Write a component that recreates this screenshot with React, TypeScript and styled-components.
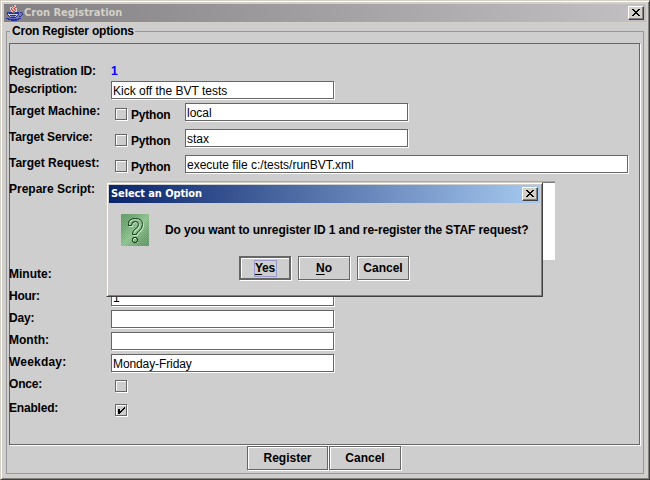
import React from "react";
import styled, { createGlobalStyle, css } from "styled-components";

const GlobalStyle = createGlobalStyle`
  html, body { margin: 0; padding: 0; overflow: hidden; }
  * { box-sizing: border-box; }
  body {
    font: bold 12px/16px "Liberation Sans", Arial, sans-serif;
    color: #000;
    background: #cecece;
  }
`;

const Frame = styled.div`
  position: relative;
  width: 650px;
  height: 480px;
  display: flex;
  flex-direction: column;
  padding: 3px;
  background: #d4d0c8;
  border: 1px solid;
  border-color: #d4d0c8 #404040 #404040 #d4d0c8;
  box-shadow: inset 1px 1px 0 #fff, inset -1px -1px 0 #808080;
`;

const TitleBar = styled.header<{ $active?: boolean }>`
  display: flex;
  align-items: center;
  flex: none;
  height: 18px;
  padding: 0 2px;
  color: ${(p) => (p.$active ? "#fff" : "#d4d0c8")};
  background: ${(p) =>
    p.$active
      ? "linear-gradient(90deg, #0a246a, #a6caf0)"
      : "linear-gradient(90deg, #828082, #c2c0c2)"};
`;

const TitleText = styled.span<{ $spacing: number }>`
  flex: 1;
  font: bold 11px/18px "DejaVu Sans Condensed", "DejaVu Sans", sans-serif;
  letter-spacing: ${(p) => p.$spacing}px;
  white-space: nowrap;
`;

const CloseButton = styled.button`
  display: flex;
  flex: none;
  width: 16px;
  height: 14px;
  padding: 2px 0 0 3px;
  border: 1px solid;
  border-color: #fff #404040 #404040 #fff;
  background: #d4d0c8;
  box-shadow: inset -1px -1px 0 #808080;
`;

const Client = styled.main`
  flex: 1;
  min-height: 0;
  margin-top: 1px;
  padding: 0 2px 2px;
  display: flex;
  background: #cecece;
`;

const OptionsGroup = styled.fieldset`
  flex: 1;
  min-width: 0;
  margin: 0;
  padding: 4px 2px 0;
  border: 1px solid #999;
`;

const GroupTitle = styled.legend`
  height: 16px;
  margin-left: 1px;
  padding: 0 1px 0 2px;
  white-space: nowrap;
  letter-spacing: -0.2px;
`;

const flush = css`
  border: 1px solid #666;
  box-shadow: 1px 1px 0 #fff;
`;

const FormPanel = styled.section`
  ${flush}
  width: 631px;
  height: 402px;
  padding-top: 19px;
`;

const Row = styled.div<{ $height: number }>`
  display: grid;
  grid-template-columns: 101px 1fr;
  height: ${(p) => p.$height}px;
`;

const Label = styled.label<{ $spacing?: number }>`
  white-space: nowrap;
  letter-spacing: ${(p) => p.$spacing ?? 0}px;
  margin-left: -1px;
`;

const Control = styled.div`
  display: flex;
  align-items: flex-start;
`;

const IdValue = styled.span`
  color: #0000fe;
`;

const Field = styled.div<{ $width?: number; $spacing?: number }>`
  ${flush}
  width: ${(p) => p.$width ?? 223}px;
  height: 18px;
  padding: 1px 0 0 1px;
  background: #fff;
  font-weight: normal;
  white-space: nowrap;
  letter-spacing: ${(p) => p.$spacing ?? 0}px;
`;

const CheckBox = styled.span<{ $top: number }>`
  display: flex;
  flex: none;
  width: 12px;
  height: 12px;
  margin: ${(p) => p.$top}px 0 0 4px;
  border: 1px solid #666;
  box-shadow: 1px 1px 0 #fff, inset 1px 1px 0 #fff;
`;

const Python = styled.span`
  width: 54px;
  margin: 4px 0 0 4px;
  letter-spacing: -0.2px;
`;

const ScriptArea = styled.div`
  width: 444px;
  height: 79px;
  border-top: 1px solid #aaa;
  background: #fff;
  box-shadow: inset 0 1px 0 #777;
`;

const Actions = styled.footer`
  display: flex;
  gap: 1px;
  padding: 1px 0 0 238px;
`;

const Button = styled.button<{ $width: number; $primary?: boolean }>`
  width: ${(p) => p.$width}px;
  height: 24px;
  flex: none;
  display: flex;
  align-items: center;
  justify-content: center;
  padding: 0;
  font: inherit;
  color: inherit;
  white-space: nowrap;
  background: #cecece;
  border: ${(p) => (p.$primary ? 2 : 1)}px solid #666;
  box-shadow: 1px 1px 0 #fff, inset 1px 1px 0 #fff;
`;

const FocusRing = styled.span`
  width: 23px;
  height: 17px;
  line-height: 15px;
  border: 1px solid #9999cc;
  letter-spacing: -0.2px;
`;

const Mnemonic = styled.span`
  text-decoration: underline;
  text-underline-offset: 2px;
  text-decoration-thickness: 1px;
  text-decoration-skip-ink: none;
`;

const Dialog = styled.div`
  position: absolute;
  left: 105px;
  top: 181px;
  width: 437px;
  height: 115px;
  display: flex;
  flex-direction: column;
  padding: 2px;
  border: 1px solid;
  border-color: #d4d0c8 #404040 #404040 #d4d0c8;
  background: #cecece;
  box-shadow: inset 1px 1px 0 #fff, inset -1px -1px 0 #808080;
`;

const Message = styled.div`
  display: flex;
  align-items: center;
  gap: 16px;
  height: 32px;
  margin: 11px 0 0 12px;
  white-space: nowrap;
  letter-spacing: -0.1px;
`;

const DialogActions = styled.div`
  display: flex;
  gap: 7px;
  margin: 10px 0 0 130px;
`;

const Cross = () => (
  <svg width="8" height="7" viewBox="0 0 8 7" shapeRendering="crispEdges">
    <path
      d="M0 0h2v1h-2zM6 0h2v1h-2zM1 1h2v1h-2zM5 1h2v1h-2zM2 2h4v1h-4zM3 3h2v1h-2zM2 4h4v1h-4zM1 5h2v1h-2zM5 5h2v1h-2zM0 6h2v1h-2zM6 6h2v1h-2z"
      fill="#000"
    />
  </svg>
);

const Tick = () => (
  <svg width="10" height="10" viewBox="0 0 10 10" shapeRendering="crispEdges">
    <path
      d="M2 4h2v5h-2zM4 6h1v2h-1zM5 5h1v2h-1zM6 4h1v2h-1zM7 3h1v2h-1zM8 2h1v2h-1z"
      fill="#000"
    />
  </svg>
);

const CupIcon = () => (
  <svg width="18" height="16" viewBox="0 0 18 16" shapeRendering="crispEdges">
    <path d="M4 2h2v-1h2v-1h2v3h1v4h-6v-2h-1z" fill="#d9cfcf" />
    <path d="M2 9h10v2h-1v1h-7v-1h-2z" fill="#c9cbe4" />
    <path
      d="M7 0h1v2h-1zM6 2h1v1h-1zM5 3h1v2h-1zM6 5h1v1h-1zM7 6h1v1h-1zM9 2h1v1h-1zM8 3h1v2h-1zM9 5h1v1h-1zM8 6h1v1h-1z"
      fill="#dc3b31"
    />
    <path d="M8 1h1v1h-1zM7 3h1v1h-1zM6 4h1v1h-1zM9 4h1v1h-1zM7 5h1v1h-1z" fill="#ee867c" />
    <path
      d="M1 7h5v1h-5zM9 7h4v1h-4zM1 8h1v2h-1zM3 8h9v1h-9zM12 8h1v2h-1zM14 7h2v1h-2zM16 8h1v2h-1zM15 10h1v1h-1zM13 11h2v1h-2zM2 10h1v1h-1zM4 10h6v1h-6zM3 11h1v1h-1zM11 10h1v1h-1zM10 11h1v1h-1zM4 12h6v1h-6zM0 13h3v1h-3zM12 13h3v1h-3zM2 14h11v1h-11zM5 15h6v1h-6z"
      fill="#27319c"
    />
    <path d="M13 8h1v1h-1zM5 11h4v1h-4zM3 13h9v1h-9z" fill="#6870bd" />
  </svg>
);

const QuestionIcon = () => (
  <svg width="28" height="32" viewBox="0 0 28 32">
    <defs>
      <linearGradient id="green" x1="0" y1="0" x2="1" y2="1">
        <stop offset="0" stopColor="#66996a" />
        <stop offset=".25" stopColor="#74aa78" />
        <stop offset=".52" stopColor="#9acc9c" />
        <stop offset=".75" stopColor="#78a97b" />
        <stop offset="1" stopColor="#629466" />
      </linearGradient>
      <pattern id="dither" width="2" height="2" patternUnits="userSpaceOnUse">
        <path d="M0 0h1v1h-1zM1 1h1v1h-1z" fill="#666" fillOpacity=".2" />
        <path d="M1 0h1v1h-1zM0 1h1v1h-1z" fill="#9c9" fillOpacity=".25" />
      </pattern>
    </defs>
    <rect width="28" height="32" rx="1" fill="url(#green)" />
    <rect width="28" height="32" rx="1" fill="url(#dither)" />
    <g fill="none" strokeWidth="1">
      <path
        d="M8.5 10.5Q8.500 5.500 14.500 5.500Q22.500 5.500 22.500 11.500Q22.500 15.500 18.500 18.500Q16.500 19.500 16.500 21.500H12.500Q12.500 18.500 14.500 16.500Q18.500 14.500 18.500 11.500Q18.500 8.500 14.500 8.500Q11.500 8.500 11.500 12.500H8.500ZM12.500 24.500h4v4h-4z"
        stroke="#d7ead7"
      />
      <path
        d="M7.500 9.500Q7.500 4.500 14.500 4.500Q21.500 4.500 21.500 10.500Q21.500 14.500 17.500 17.500Q15.500 18.500 15.500 20.500H11.500Q11.500 17.500 13.500 15.500Q17.500 13.500 17.500 10.500Q17.500 7.500 14.500 7.500Q10.500 7.500 10.500 11.500H7.500ZM12.500 23.500h3v1h1v3h-1v1h-3v-1h-1v-3h1z"
        stroke="#123e18"
      />
    </g>
  </svg>
);

const targets = [
  { label: "Target Machine:", value: "local", spacing: 0 },
  { label: "Target Service:", value: "stax", spacing: -0.15 },
  { label: "Target Request:", value: "execute file c:/tests/runBVT.xml", width: 443, spacing: 0 },
];

const schedule = [
  { label: "Minute:", value: "", spacing: 0 },
  { label: "Hour:", value: "1", spacing: -0.25 },
  { label: "Day:", value: "", spacing: -0.2 },
  { label: "Month:", value: "", spacing: 0 },
  { label: "Weekday:", value: "Monday-Friday", spacing: 0.2, valueSpacing: -0.1 },
];

export default function App() {
  return (
    <>
      <GlobalStyle />
      <Frame>
        <TitleBar>
          <CupIcon />
          <TitleText $spacing={0}>Cron Registration</TitleText>
          <CloseButton aria-label="Close">
            <Cross />
          </CloseButton>
        </TitleBar>
        <Client>
          <OptionsGroup>
            <GroupTitle>Cron Register options</GroupTitle>
            <FormPanel>
              <Row $height={18}>
                <Label $spacing={-0.15}>Registration ID:</Label>
                <Control>
                  <IdValue>1</IdValue>
                </Control>
              </Row>
              <Row $height={22}>
                <Label $spacing={-0.15}>Description:</Label>
                <Control>
                  <Field>Kick off the BVT tests</Field>
                </Control>
              </Row>
              {targets.map((t) => (
                <Row $height={26} key={t.label}>
                  <Label $spacing={t.spacing}>{t.label}</Label>
                  <Control>
                    <CheckBox $top={5} />
                    <Python>Python</Python>
                    <Field $width={t.width}>{t.value}</Field>
                  </Control>
                </Row>
              ))}
              <Row $height={85}>
                <Label>Prepare Script:</Label>
                <ScriptArea />
              </Row>
              {schedule.map((s) => (
                <Row $height={22} key={s.label}>
                  <Label $spacing={s.spacing}>{s.label}</Label>
                  <Control>
                    <Field $spacing={s.valueSpacing}>{s.value}</Field>
                  </Control>
                </Row>
              ))}
              <Row $height={24}>
                <Label $spacing={-0.2}>Once:</Label>
                <Control>
                  <CheckBox $top={4} />
                </Control>
              </Row>
              <Row $height={24}>
                <Label $spacing={-0.2}>Enabled:</Label>
                <Control>
                  <CheckBox $top={4}>
                    <Tick />
                  </CheckBox>
                </Control>
              </Row>
            </FormPanel>
            <Actions>
              <Button $width={81}>Register</Button>
              <Button $width={72}>Cancel</Button>
            </Actions>
          </OptionsGroup>
        </Client>
        <Dialog role="dialog">
          <TitleBar $active>
            <TitleText $spacing={-0.1}>Select an Option</TitleText>
            <CloseButton aria-label="Close">
              <Cross />
            </CloseButton>
          </TitleBar>
          <Message>
            <QuestionIcon />
            <span>Do you want to unregister ID 1 and re-register the STAF request?</span>
          </Message>
          <DialogActions>
            <Button $width={52} $primary>
              <FocusRing>
                <Mnemonic>Y</Mnemonic>es
              </FocusRing>
            </Button>
            <Button $width={52}>
              <span>
                <Mnemonic>N</Mnemonic>o
              </span>
            </Button>
            <Button $width={52}>Cancel</Button>
          </DialogActions>
        </Dialog>
      </Frame>
    </>
  );
}
